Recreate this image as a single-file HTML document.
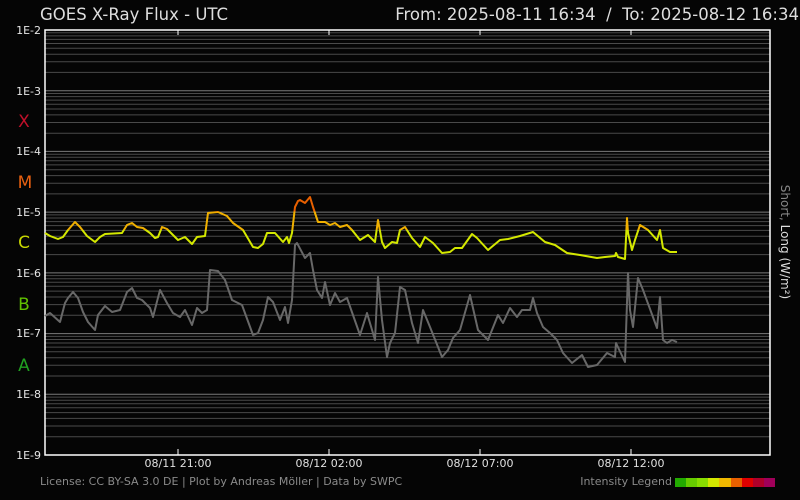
<!DOCTYPE html>
<html><head><meta charset="utf-8"><style>
html,body{margin:0;padding:0;background:#050505;}
body{width:800px;height:500px;overflow:hidden;position:relative;font-family:"DejaVu Sans","Liberation Sans",sans-serif;}
</style></head><body>
<svg id="s" width="800" height="500" xmlns="http://www.w3.org/2000/svg" style="position:absolute;left:0;top:0">
<defs>
<linearGradient id="lg" gradientUnits="userSpaceOnUse" x1="0" y1="190" x2="0" y2="260">
<stop offset="0" stop-color="#e86000"/><stop offset="0.31" stop-color="#e86000"/>
<stop offset="0.31" stop-color="#f0b000"/><stop offset="0.57" stop-color="#f0b000"/>
<stop offset="0.57" stop-color="#d4e800"/><stop offset="1" stop-color="#d4e800"/>
</linearGradient>
</defs>
<g id="grid"></g>
<text x="40" y="20" fill="#dddddd" font-size="16.5">GOES X-Ray Flux - UTC</text>
<text x="799" y="20" fill="#dddddd" font-size="16.5" text-anchor="end">From: 2025-08-11 16:34&#160;&#160;/&#160;&#160;To: 2025-08-12 16:34</text>
<g fill="#e6e6e6" font-size="11" text-anchor="end">
<text x="41" y="34">1E-2</text><text x="41" y="95">1E-3</text><text x="41" y="155">1E-4</text><text x="41" y="216">1E-5</text>
<text x="41" y="277">1E-6</text><text x="41" y="337">1E-7</text><text x="41" y="398">1E-8</text><text x="41" y="459">1E-9</text>
</g>
<g font-size="17" text-anchor="middle">
<text x="24" y="127" fill="#c0102a">X</text><text x="25" y="188" fill="#e86010">M</text>
<text x="24" y="248" fill="#c8d800">C</text><text x="24" y="310" fill="#60c000">B</text><text x="24" y="371" fill="#20a020">A</text>
</g>
<g fill="#e0e0e0" font-size="11" text-anchor="middle">
<text x="178" y="467">08/11 21:00</text><text x="329" y="467">08/12 02:00</text><text x="480" y="467">08/12 07:00</text><text x="631" y="467">08/12 12:00</text>
</g>
<text x="40" y="485" fill="#8a8a8a" font-size="11">License: CC BY-SA 3.0 DE | Plot by Andreas Möller | Data by SWPC</text>
<text x="672" y="485" fill="#8a8a8a" font-size="11" text-anchor="end">Intensity Legend</text>
<g>
<rect x="675" y="478" width="12" height="9" fill="#22aa00"/><rect x="686" y="478" width="12" height="9" fill="#66cc00"/>
<rect x="697" y="478" width="12" height="9" fill="#88dd00"/><rect x="708" y="478" width="12" height="9" fill="#d4e800"/>
<rect x="719" y="478" width="12" height="9" fill="#f0b800"/><rect x="731" y="478" width="12" height="9" fill="#e86000"/>
<rect x="742" y="478" width="12" height="9" fill="#e00000"/><rect x="753" y="478" width="12" height="9" fill="#b0002a"/>
<rect x="764" y="478" width="11" height="9" fill="#a0005a"/>
</g>
<text transform="translate(781,242) rotate(90)" font-size="12" text-anchor="middle"><tspan fill="#888">Short, </tspan><tspan fill="#dddddd">Long (W/m²)</tspan></text>
<polyline fill="none" stroke="#686868" stroke-width="2" stroke-linejoin="round" points="45,316 50,313 60,322 65,303 68,298 73,292 78,298 83,312 88,322 95,330 98,315 105,306 112,312 120,310 127,292 132,288 137,298 142,300 150,308 153,317 160,290 167,303 173,313 180,317 185,310 192,325 197,308 202,313 207,310 210,270 218,271 225,280 232,300 242,305 253,335 258,333 263,320 268,297 273,302 280,320 285,307 288,323 292,300 295,245 297,243 305,258 310,253 313,270 317,290 322,298 325,282 330,305 335,293 340,302 347,298 360,335 367,313 375,340 378,277 382,320 387,357 390,343 395,333 400,287 405,290 412,323 418,343 423,310 430,327 442,357 448,350 453,338 460,330 470,295 478,330 488,340 490,335 498,315 503,323 510,308 517,317 522,310 530,310 533,298 537,313 543,327 550,333 557,340 563,353 572,363 582,355 588,367 597,365 607,353 615,357 616,343 625,362 628,273 630,310 633,327 638,278 643,290 657,328 660,297 663,340 667,343 672,340 677,342"/>
<polyline fill="none" stroke="url(#lg)" stroke-width="2" stroke-linejoin="round" points="45,233 50,236 58,239 63,237 68,230 75,222 80,227 87,236 95,242 100,237 105,234 122,233 127,225 132,223 137,227 143,228 150,233 155,238 158,237 162,227 167,229 173,235 178,240 185,237 192,244 197,237 205,236 208,213 218,212 227,216 233,223 243,230 253,247 258,248 263,244 267,233 275,233 283,242 287,237 289,243 292,233 295,207 298,201 300,200 305,203 310,197 313,207 318,222 325,222 330,225 335,223 340,227 347,225 352,230 360,240 368,235 375,242 378,220 382,242 385,248 392,242 397,243 400,230 405,227 412,238 420,247 425,237 433,243 442,253 450,252 455,248 462,248 472,234 477,238 488,250 500,240 508,239 520,236 533,232 545,242 555,245 567,253 580,255 597,258 605,257 615,256 616,253 618,257 625,259 627,218 628,233 632,250 635,240 640,225 648,230 657,240 660,230 663,248 670,252 677,252"/>
</svg>
<script>
var g=document.getElementById('grid'),d=425/7,h='';
var L=[0.301,0.477,0.602,0.699,0.778,0.845,0.903,0.954];
for(var k=1;k<=7;k++){var yb=30+k*d;
 if(k<7)h+='<line x1="45" x2="770" y1="'+yb.toFixed(1)+'" y2="'+yb.toFixed(1)+'" stroke="#7a7a7a" stroke-width="1"/>';
 for(var i=0;i<L.length;i++){var y=(yb-L[i]*d).toFixed(1);h+='<line x1="45" x2="770" y1="'+y+'" y2="'+y+'" stroke="#4a4a4a" stroke-width="1"/>';}}
h+='<rect x="45" y="30" width="725" height="425" fill="none" stroke="#ffffff" stroke-width="1.5"/>';
[178,329,480,631].forEach(function(x){h+='<line x1="'+x+'" x2="'+x+'" y1="449" y2="455" stroke="#fff"/><line x1="'+x+'" x2="'+x+'" y1="30" y2="35" stroke="#fff"/>';});
g.innerHTML=h;
</script>
</body></html>
